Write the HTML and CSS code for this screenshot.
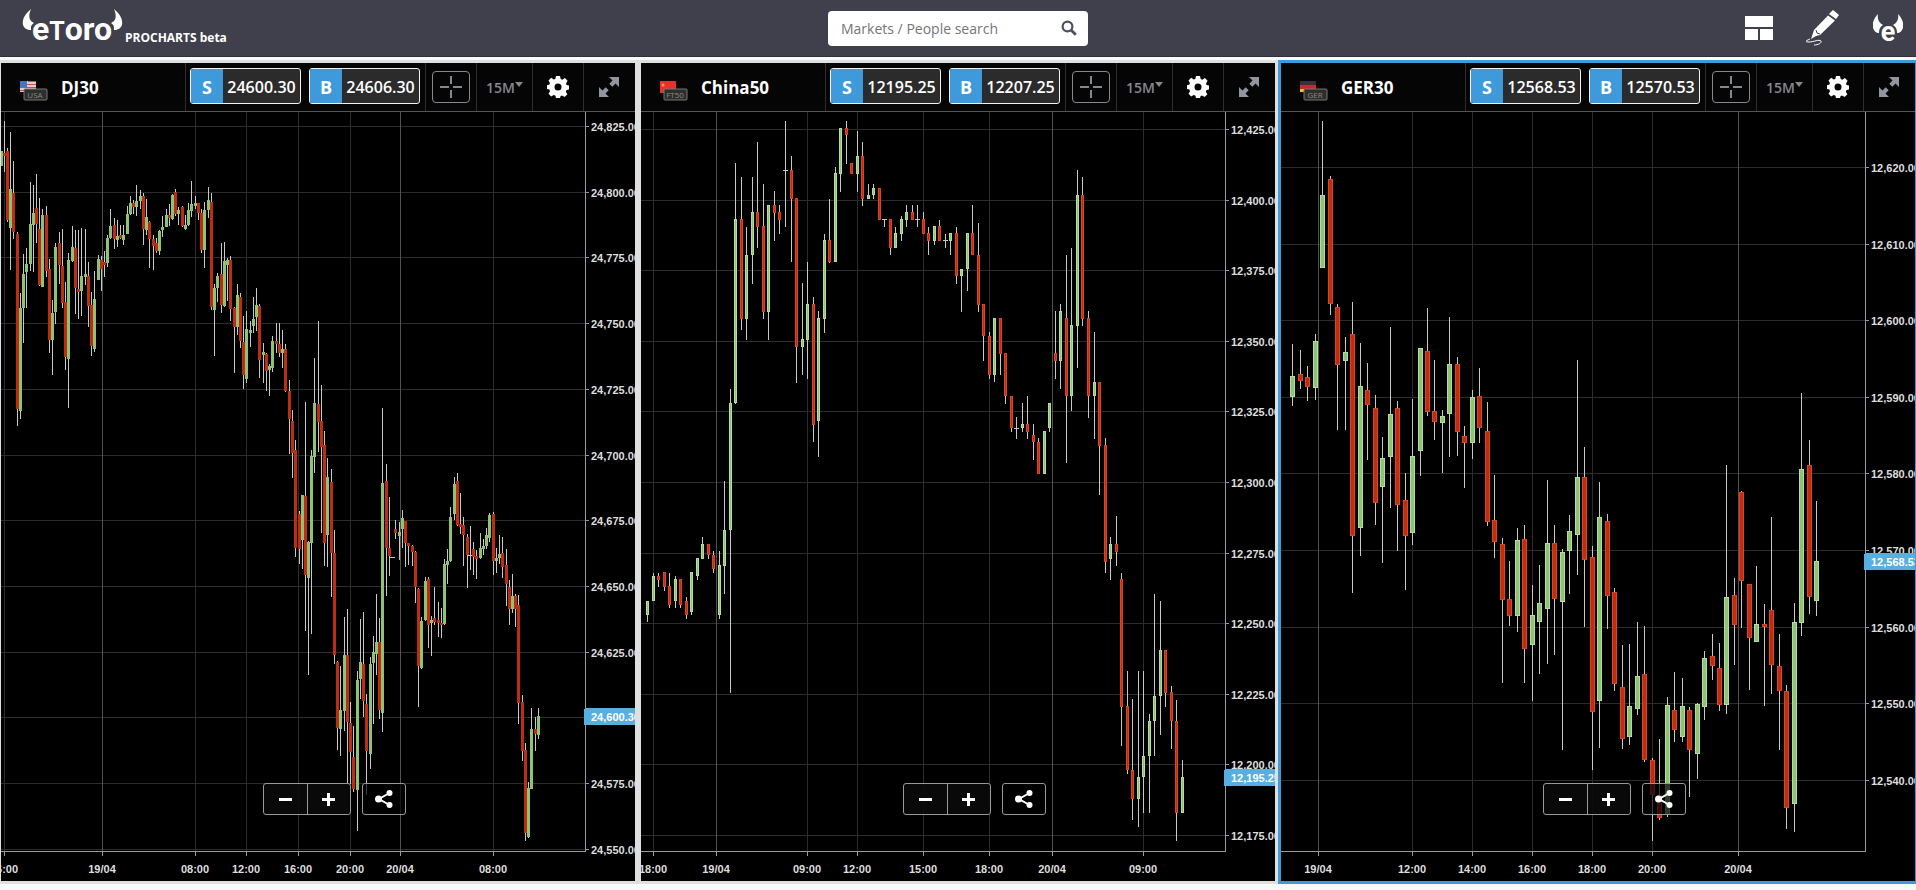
FILE: index.html
```html
<!-- index.html -->
<!DOCTYPE html>
<html lang="en">
  <head>
    <meta charset="utf-8">
    <title>eToro ProCharts</title>
    <link rel="stylesheet" href="styles.css">
  </head>
  <body>
    <header class="topbar">
      <a class="brand" href="#" aria-label="eToro ProCharts">
        <svg class="logo" width="101" height="36" viewBox="0 0 101 36">
          <path d="M9 1C3 6 0 11 1 17c1 3 4 5 8 5 0-4 0-5 3-7C7 13 6 8 9 1z"/>
          <path d="M92 1c6 5 9 10 8 16-1 3-4 5-8 5 0-4 0-5-3-7 5-2 6-7 3-14z"/>
          <text x="10" y="32"><tspan class="logo-low">e</tspan><tspan class="logo-cap">T</tspan><tspan class="logo-low">oro</tspan></text>
        </svg>
        <span class="brand-sub">PROCHARTS beta</span>
      </a>

      <form class="search" action="#" role="search">
        <input type="text" name="q" placeholder="Markets / People search" aria-label="Markets / People search">
        <button type="submit" aria-label="Search">
          <svg width="16" height="16" viewBox="0 0 16 16">
            <circle cx="6.5" cy="6.5" r="4.9" fill="none" stroke="#4b5060" stroke-width="2.2"/>
            <path d="M10 10l4.8 4.8" stroke="#4b5060" stroke-width="2.8"/>
          </svg>
        </button>
      </form>

      <nav class="tools">
        <button type="button" aria-label="Layout">
          <svg width="28" height="24" viewBox="0 0 28 24" fill="#fff">
            <path d="M0 0h28v11H0zM0 13h13v11H0zM15 13h13v11H15z"/>
          </svg>
        </button>
        <button type="button" aria-label="Draw">
          <svg width="34" height="36" viewBox="0 0 34 36">
            <path d="M27 0l6 5-3 4-7-5zM22 5.500l7 5L14 25l-4 1-5 3 2-6 1-3z" fill="#fff"/>
            <path d="M10 20l1 3 3 1" fill="none" stroke="#3f404c"/>
            <path d="M4 29c-5 2-5 3-1 3 5 0 10-3 12-1 1 2-3 4-7 4" fill="none" stroke="#fff"/>
          </svg>
        </button>
        <button type="button" aria-label="Account">
          <svg width="30" height="30" viewBox="0 0 30 30" fill="#fff">
            <path d="M5 1C1 5-1 10 0 15c1 3 3 5 6 5 0-4 1-6 4-8C6 10 4 6 5 1z"/>
            <path d="M25 1c4 4 6 9 5 14-1 3-3 5-6 5 0-4-1-6-4-8 4-2 6-6 5-11z"/>
            <text class="mini-e" x="15" y="28" text-anchor="middle">e</text>
          </svg>
        </button>
      </nav>
    </header>

    <svg class="defs" width="0" height="0" aria-hidden="true">
      <symbol id="gear" viewBox="0 0 22 22">
        <path fill="#fff" fill-rule="evenodd" d="M9 0h4l.7 3 1.600.7L18 2l2.600 2.800-1.600 2.600.7 1.600 2.300.5v4l-2.500.6-.7 1.600 1.600 2.600-2.800 2.800-2.500-1.600-1.500.6L13 22H9l-.7-2.500-1.600-.6L4.200 20.500 1.500 17.700 3 15.200l-.6-1.600L0 13V9.200l2.400-.7.6-1.600-1.500-2.500L4.200 1.700 6.700 3.600 8.300 3zM11 7.500a3.500 3.500 0 1 0 0 7 3.500 3.500 0 0 0 0-7z"/>
      </symbol>
      <symbol id="expand" viewBox="0 0 20 20">
        <path fill="#92979f" d="M10 0h10v10l-3.500-3.500-3.200 3.200-3-3 3.200-3.200zM0 10l3.500 3.500 3.200-3.200 3 3-3.200 3.200L10 20H0z"/>
      </symbol>
      <symbol id="cross" viewBox="0 0 24 24">
        <path fill="none" stroke="#85888f" stroke-width="2" d="M12 1v8M12 15v8M1 12h9M14 12h9"/>
      </symbol>
      <symbol id="share" viewBox="0 0 18 18">
        <path d="M14.500 3L4 9l10.500 6" fill="none" stroke="#fff" stroke-width="2"/>
        <circle cx="3.500" cy="9" r="3.500" fill="#fff"/>
        <circle cx="14.500" cy="3" r="3" fill="#fff"/>
        <circle cx="14.500" cy="15" r="3" fill="#fff"/>
      </symbol>
    </svg>

    <main class="panels">
      <section class="panel">
        <div class="panel-head">
          <div class="market">
            <svg width="28" height="20" viewBox="0 0 28 20">
              <rect width="16" height="11" fill="#e8c9cb"/>
              <path d="M0 3.500h16M0 6.500h16M0 9.500h16M8 .5h8" stroke="#d0494e"/>
              <rect width="7" height="6" fill="#3d78c4"/>
              <rect x="4" y="8" width="23" height="11" rx="1" fill="#2e2e2c" stroke="#777"/>
              <text class="tag" x="15" y="17" text-anchor="middle">USA</text>
            </svg>
            <h2>DJ30</h2>
          </div>
          <div class="trade">
            <button type="button"><b>S</b><span>24600.30</span></button>
            <button type="button"><b>B</b><span>24606.30</span></button>
          </div>
          <div class="cell cell-cross"><button type="button" aria-label="Crosshair"><svg width="24" height="24"><use href="#cross"/></svg></button></div>
          <div class="cell cell-period"><select aria-label="Period"><option>15M</option></select><i class="caret"></i></div>
          <div class="cell cell-gear"><button type="button" aria-label="Settings"><svg width="22" height="22"><use href="#gear"/></svg></button></div>
          <div class="cell cell-expand"><button type="button" aria-label="Expand"><svg width="20" height="20"><use href="#expand"/></svg></button></div>
        </div>
        <div class="chart" id="dj30">
          <div class="chart-tools">
            <div class="zoom">
              <button type="button" aria-label="Zoom out"><i class="minus"></i></button>
              <button type="button" aria-label="Zoom in"><i class="plus"></i></button>
            </div>
            <button type="button" class="share" aria-label="Share"><svg width="18" height="18"><use href="#share"/></svg></button>
          </div>
        </div>
      </section>

      <section class="panel">
        <div class="panel-head">
          <div class="market">
            <svg width="28" height="20" viewBox="0 0 28 20">
              <rect width="16" height="12" fill="#e8302c"/>
              <circle cx="3" cy="4" r="1.500" fill="#f2a03a"/>
              <rect x="4" y="8" width="23" height="11" rx="1" fill="#2e2e2c" stroke="#777"/>
              <text class="tag" x="15" y="17" text-anchor="middle">FT50</text>
            </svg>
            <h2>China50</h2>
          </div>
          <div class="trade">
            <button type="button"><b>S</b><span>12195.25</span></button>
            <button type="button"><b>B</b><span>12207.25</span></button>
          </div>
          <div class="cell cell-cross"><button type="button" aria-label="Crosshair"><svg width="24" height="24"><use href="#cross"/></svg></button></div>
          <div class="cell cell-period"><select aria-label="Period"><option>15M</option></select><i class="caret"></i></div>
          <div class="cell cell-gear"><button type="button" aria-label="Settings"><svg width="22" height="22"><use href="#gear"/></svg></button></div>
          <div class="cell cell-expand"><button type="button" aria-label="Expand"><svg width="20" height="20"><use href="#expand"/></svg></button></div>
        </div>
        <div class="chart" id="china50">
          <div class="chart-tools">
            <div class="zoom">
              <button type="button" aria-label="Zoom out"><i class="minus"></i></button>
              <button type="button" aria-label="Zoom in"><i class="plus"></i></button>
            </div>
            <button type="button" class="share" aria-label="Share"><svg width="18" height="18"><use href="#share"/></svg></button>
          </div>
        </div>
      </section>

      <section class="panel active">
        <div class="panel-head">
          <div class="market">
            <svg width="28" height="20" viewBox="0 0 28 20">
              <rect width="16" height="4" fill="#35343c"/>
              <rect y="4" width="16" height="4" fill="#d3232c"/>
              <rect y="8" width="16" height="3" fill="#f0c030"/>
              <rect x="4" y="8" width="23" height="11" rx="1" fill="#2e2e2c" stroke="#777"/>
              <text class="tag" x="15" y="17" text-anchor="middle">GER</text>
            </svg>
            <h2>GER30</h2>
          </div>
          <div class="trade">
            <button type="button"><b>S</b><span>12568.53</span></button>
            <button type="button"><b>B</b><span>12570.53</span></button>
          </div>
          <div class="cell cell-cross"><button type="button" aria-label="Crosshair"><svg width="24" height="24"><use href="#cross"/></svg></button></div>
          <div class="cell cell-period"><select aria-label="Period"><option>15M</option></select><i class="caret"></i></div>
          <div class="cell cell-gear"><button type="button" aria-label="Settings"><svg width="22" height="22"><use href="#gear"/></svg></button></div>
          <div class="cell cell-expand"><button type="button" aria-label="Expand"><svg width="20" height="20"><use href="#expand"/></svg></button></div>
        </div>
        <div class="chart" id="ger30">
          <div class="chart-tools">
            <div class="zoom">
              <button type="button" aria-label="Zoom out"><i class="minus"></i></button>
              <button type="button" aria-label="Zoom in"><i class="plus"></i></button>
            </div>
            <button type="button" class="share" aria-label="Share"><svg width="18" height="18"><use href="#share"/></svg></button>
          </div>
        </div>
      </section>
    </main>

    <script src="charts.js"></script>
  </body>
</html>
```
FILE: styles.css
```css
* {
  box-sizing: border-box;
}
body {
  margin: 0;
  height: 100vh;
  display: flex;
  flex-direction: column;
  overflow: hidden;
  background-color: #fafafa;
  font-family: "Open Sans", "Noto Sans", sans-serif;
}
button {
  margin: 0;
  padding: 0;
  border: none;
  background: none;
  color: #ffffff;
  font-family: inherit;
  cursor: pointer;
}
svg {
  display: block;
}
.defs {
  position: absolute;
}

/* top bar */
.topbar {
  display: grid;
  grid-template-columns: 1fr 260px 1fr;
  align-items: center;
  height: 57px;
  flex: none;
  background-color: #3f404c;
  border-bottom: 1px solid #332f38;
}
.brand {
  display: flex;
  align-items: flex-end;
  gap: 2px;
  padding: 0 0 4px 22px;
  color: #ffffff;
  text-decoration: none;
}
.logo {
  fill: #ffffff;
  overflow: visible;
  font-family: "Roboto", sans-serif;
  font-weight: bold;
}
.logo-low {
  font-size: 32px;
}
.logo-cap {
  font-size: 25px;
}
.brand-sub {
  font-size: 12px;
  line-height: 12px;
  font-weight: bold;
}
.search {
  display: flex;
  align-items: center;
  height: 35px;
  margin: 0;
  padding: 0 11px 0 13px;
  background-color: #ffffff;
  border-radius: 4px;
}
.search input {
  flex: 1;
  min-width: 0;
  padding: 0;
  border: none;
  outline: none;
  background: none;
  color: #555555;
  font: 14px "Open Sans", sans-serif;
}
.search input::placeholder {
  color: #757575;
}
.tools {
  display: flex;
  justify-content: flex-end;
  align-items: center;
  gap: 33px;
  padding-right: 13px;
}

/* chart panels */
.panels {
  display: grid;
  grid-template-columns: repeat(3, 1fr);
  flex: 1;
  min-height: 0;
  margin: 3px -2px 6px;
}
.panel {
  display: flex;
  flex-direction: column;
  min-width: 0;
  min-height: 0;
  border: 3px solid #dfdfdf;
  background-color: #000000;
}
.panel.active {
  border-color: #3f9adc;
}
.panel-head {
  display: flex;
  flex: none;
  height: 49px;
  background-color: #050505;
  border-bottom: 1px solid #555555;
}
.market {
  flex: 1;
  min-width: 0;
  display: flex;
  align-items: center;
  gap: 13px;
  padding-left: 19px;
}
.market svg {
  margin-top: 8px;
}
.market h2 {
  margin: 0;
  color: #ffffff;
  font-size: 17px;
  font-weight: bold;
}
.tag {
  fill: #8a8a88;
  font-size: 8px;
}
.trade {
  display: flex;
  gap: 8px;
  padding: 5px 5px 0 4px;
  border-left: 1px solid #2e2e2e;
}
.trade button {
  display: flex;
  width: 111px;
  height: 36px;
  border: 1px solid #f2f2f2;
  border-radius: 3px;
  overflow: hidden;
  background-color: #2b2b2b;
  font-size: 16px;
  line-height: 36px;
}
.trade b {
  width: 32px;
  background-color: #3f9adc;
  font-size: 18px;
}
.trade span {
  flex: 1;
  font-weight: 600;
}
.cell {
  display: flex;
  align-items: center;
  justify-content: center;
  border-left: 1px solid #2e2e2e;
}
.cell-cross {
  width: 51px;
}
.cell-cross button {
  display: grid;
  place-items: center;
  width: 38px;
  height: 32px;
  border: 1px solid #85888f;
  border-radius: 4px;
}
.cell-period {
  width: 56px;
}
.cell-gear {
  width: 51px;
}
.cell-expand {
  width: 52px;
  padding-right: 2px;
}
.cell-period select {
  appearance: none;
  padding: 0;
  border: none;
  background: none;
  color: #85888f;
  font: 600 14px "Open Sans", sans-serif;
}
.caret {
  margin-bottom: 6px;
  border: 4px solid transparent;
  border-top: 5px solid #85888f;
  border-bottom: none;
}
.mini-e {
  font: bold 27px "Roboto", sans-serif;
}

/* plot */
.chart {
  position: relative;
  flex: 1;
  min-height: 0;
  overflow: hidden;
}
.plot {
  position: absolute;
  width: 100%;
  height: 100%;
  shape-rendering: crispEdges;
}
.plot text {
  fill: #dedede;
  font: bold 11px "Liberation Sans", Arial, sans-serif;
}
.plot .last-text {
  fill: #ffffff;
}
.grid {
  fill: #2c2c2c;
}
.day {
  fill: #525252;
}
.axis {
  fill: #999999;
}
.wick {
  fill: #c8c8c8;
}
.up {
  fill: #8fc374;
}
.down {
  fill: #bd2d0f;
}
.up-edge {
  fill: #b5dca1;
}
.down-edge {
  fill: #e0431f;
}
.last {
  fill: #57afdf;
}
.chart-tools {
  position: absolute;
  left: 32px;
  right: 0;
  bottom: 66px;
  display: flex;
  justify-content: center;
  gap: 11px;
}
.zoom {
  display: flex;
  border: 1px solid #999999;
  border-radius: 3px;
  background-color: rgba(10, 10, 10, 0.9);
}
.zoom button {
  display: grid;
  place-items: center;
  width: 43px;
  height: 30px;
}
.zoom button + button {
  border-left: 1px solid #999999;
}
.minus, .plus {
  width: 13px;
  height: 13px;
  background: linear-gradient(#ffffff, #ffffff) center / 13px 3px no-repeat;
}
.plus {
  background: linear-gradient(#ffffff, #ffffff) center / 13px 3px no-repeat,
    linear-gradient(#ffffff, #ffffff) center / 3px 13px no-repeat;
}
.share {
  display: grid;
  place-items: center;
  width: 44px;
  height: 32px;
  border: 1px solid #999999;
  border-radius: 3px;
  background-color: rgba(0, 0, 0, 0.7);
}
```
FILE: charts.js
```js
// Chart geometry is kept on a 634 x 769 sheet and scaled to the panel.
const SHEET_W = 634;
const SHEET_H = 769;
const AXIS_X = 584;
const AXIS_Y = 739;

// candle rows: slot, high, body top, body bottom, low, u(p) / d(own) / n(one)
const charts = [
  {
    id: 'dj30',
    body: 3,
    outline: false,
    first: 24825, step: -25, count: 12, top: 14, gap: 65.7,
    times: [[3, '16:00'], [101, '19/04'], [194, '08:00'], [245, '12:00'], [297, '16:00'], [349, '20:00'], [399, '20/04'], [492, '08:00']],
    last: [604, '24,600.30'],
    candles: `
0 39 39 54 54 u;3 9 41 44 60 d;6 36 39 108 110 d;9 20 77 116 158 u;12 49 81 120 127 d
16 120 122 297 314 d;19 181 196 299 307 u;22 142 162 196 231 u;25 136 152 160 196 u;29 70 112 152 159 u
32 73 101 113 160 u;35 62 96 112 131 d;38 86 117 173 174 d;41 97 103 175 175 u;45 94 103 159 165 d
48 147 157 228 241 d;51 188 201 228 263 u;54 131 135 200 212 u;58 120 131 153 172 d;61 117 154 191 196 d
64 170 190 245 258 d;67 141 148 247 296 u;71 114 135 149 150 u;74 118 136 176 202 d;77 118 177 180 207 d
80 116 164 179 204 u;84 117 162 165 173 u;87 150 164 194 215 d;90 180 193 234 244 d;93 159 187 237 240 u
97 143 147 168 168 u;100 144 148 157 179 d;103 139 150 153 165 d;106 123 126 151 155 u;109 97 114 126 127 u
113 106 113 127 137 d;116 108 124 128 135 u;119 113 123 126 127 d;122 113 123 128 133 u;126 94 102 122 122 u
129 84 91 102 103 u;132 88 91 95 102 d;135 73 89 95 104 u;139 78 84 89 97 u;142 81 84 117 133 d
145 87 105 118 123 u;148 109 110 127 156 d;152 123 127 134 158 d;155 126 131 139 141 d;158 118 119 139 143 u
161 104 115 118 125 u;165 97 103 115 115 u;168 92 103 106 114 d;171 82 83 107 108 u;174 77 80 102 104 d
177 95 98 102 113 u;181 94 95 114 115 d;184 103 113 117 118 u;187 91 98 113 114 u;190 69 92 99 105 u
194 84 91 94 97 u;197 91 91 101 108 d;200 97 101 138 141 d;203 90 98 138 156 u;207 75 88 98 106 u
210 81 90 195 198 d;213 172 176 198 244 u;216 161 164 176 190 u;220 131 162 193 201 d;223 130 149 194 195 u
226 146 148 153 189 u;229 144 148 197 209 d;233 195 196 215 261 d;236 172 183 215 223 u;239 181 185 229 236 d
242 204 230 263 277 d;245 199 217 267 271 u;249 209 218 221 235 u;252 185 207 214 221 u;255 176 193 205 219 u
258 192 194 248 266 d;262 231 240 243 271 u;265 241 242 259 279 d;268 252 254 258 284 u;271 224 229 256 260 u
275 211 229 232 241 d;278 211 232 241 245 d;281 218 237 241 256 u;284 232 237 279 280 d;288 268 279 307 342 d
291 298 309 341 366 d;294 328 338 436 445 d;298 399 402 437 452 d;301 383 383 428 457 u;304 290 384 463 519 d
307 429 430 466 563 u;310 338 344 431 522 u;313 246 291 345 361 u;317 209 292 310 340 d;320 273 309 335 421 d
323 319 333 431 454 d;326 346 365 423 455 u;330 357 370 441 485 d;333 418 441 543 552 d;336 549 550 616 638 d
339 554 598 617 644 u;343 505 543 599 619 u;346 497 543 610 672 d;349 590 611 640 672 d;352 614 645 677 680 d
356 559 568 678 719 u;359 507 550 567 587 u;362 500 552 589 605 d;365 582 592 639 683 d;369 545 552 642 657 u
372 524 540 551 612 u;375 482 530 542 563 u;378 506 530 598 607 d;381 296 371 601 620 u;385 352 369 436 484 d
388 385 436 444 464 d;391 445 445 445 445 n;394 408 417 421 427 d;398 410 420 424 448 u;401 398 406 417 436 u
404 409 409 431 455 d;407 431 431 434 453 d;411 433 434 440 454 d;414 439 440 475 491 d;417 476 477 554 595 d
420 505 509 556 557 u;424 465 469 508 509 u;427 465 467 513 536 d;430 504 508 511 544 u;433 475 506 510 513 d
437 490 508 511 525 d;440 496 511 513 526 d;443 447 452 512 513 u;446 437 449 453 472 u;449 395 405 449 450 u
453 365 372 402 408 u;456 361 369 413 414 d;459 381 412 415 422 d;462 405 413 423 454 d;466 422 425 443 476 d
469 414 443 443 458 n;472 430 437 445 463 d;475 438 444 447 467 d;479 421 436 446 447 u;482 427 434 437 443 u
485 416 423 434 437 u;488 401 403 426 430 u;492 400 402 449 463 d;495 436 446 449 461 u;498 423 442 446 452 u
501 425 441 455 466 d;505 437 453 472 494 d;508 468 475 497 513 d;511 462 484 497 501 u;514 482 484 497 515 d
517 483 493 591 612 d;521 583 590 639 649 d;524 631 638 721 729 d;527 670 676 725 726 u;530 596 617 677 677 u
534 605 617 622 639 d;537 596 604 623 627 u`
  },
  {
    id: 'china50',
    body: 3,
    outline: true,
    first: 12425, step: -25, count: 11, top: 17, gap: 70.6,
    times: [[12, '18:00'], [75, '19/04'], [166, '09:00'], [216, '12:00'], [282, '15:00'], [348, '18:00'], [411, '20/04'], [502, '09:00']],
    last: [665, '12,195.25'],
    candles: `
6 489 489 503 510 u;12 461 464 489 489 u;17 461 464 468 475 d;23 460 460 475 479 d;28 461 474 493 496 d
34 464 467 489 496 u;39 467 467 493 496 d;45 485 489 503 507 d;50 460 460 500 503 u;56 446 446 464 468 u
61 425 432 447 447 u;67 432 432 443 447 d;72 439 443 457 461 d;78 439 453 503 507 u;83 369 418 454 482 u
89 277 291 418 581 u;94 51 107 291 292 u;100 65 107 207 218 d;105 115 143 207 228 u;111 65 100 143 172 u
116 30 100 115 136 d;122 72 114 200 207 d;127 93 93 200 228 u;133 79 93 101 129 d;138 93 100 108 122 d
144 9 58 58 115 n;150 44 58 87 150 d;155 86 86 235 271 d;161 171 227 235 263 u;166 150 192 228 267 u
172 185 192 313 330 d;177 199 206 309 345 u;183 122 128 207 221 u;188 87 128 150 151 d;194 55 61 150 150 u
199 16 16 62 80 u;205 9 16 23 52 d;210 51 51 62 62 d;216 19 44 62 80 u;221 30 44 87 94 d
227 72 83 87 87 u;232 72 76 83 87 u;238 76 76 108 108 d;243 107 107 107 115 n;249 107 107 136 143 d
254 115 121 136 136 u;260 104 107 122 129 u;265 93 100 108 115 u;271 93 100 108 108 d;276 93 107 107 115 n
282 100 107 122 122 d;287 115 121 129 143 d;293 114 114 129 133 u;298 108 114 129 129 d;304 122 128 128 136 n
309 121 121 129 143 u;315 115 121 164 172 d;320 157 157 164 200 u;326 121 121 157 179 u;331 93 121 143 143 d
337 111 143 193 200 d;342 192 192 224 249 d;348 220 224 263 267 d;353 206 206 263 270 u;359 206 206 242 263 d
364 241 241 284 292 d;370 284 284 316 320 d;375 305 316 316 327 n;381 291 312 316 320 u;386 284 312 320 327 d
392 312 323 330 348 d;397 326 330 362 362 d;403 319 319 362 362 u;408 291 291 316 320 u;414 199 241 249 267 d
419 192 199 249 277 u;425 143 206 284 351 d;430 136 213 284 299 u;436 58 83 214 256 u;441 65 83 207 214 d
447 199 206 284 306 d;453 220 270 284 327 u;458 270 270 334 383 d;464 326 333 450 461 d;469 425 432 447 468 u
475 404 432 440 454 d;480 461 467 595 634 d;486 559 594 658 662 d;491 587 658 687 708 d;497 559 665 687 715 u
502 559 644 665 701 u;508 602 609 644 701 u;513 482 584 609 644 u;519 489 538 584 623 u;524 538 538 581 595 d
530 574 580 609 637 d;535 588 609 701 729 d;541 648 665 701 701 u`
  },
  {
    id: 'ger30',
    body: 5,
    outline: true,
    first: 12620, step: -10, count: 9, top: 55, gap: 76.6,
    times: [[37, '19/04'], [131, '12:00'], [191, '14:00'], [251, '16:00'], [311, '18:00'], [371, '20:00'], [457, '20/04']],
    last: [449, '12,568.53'],
    candles: `
11 232 264 285 294 u;19 238 262 269 277 d;26 254 265 275 289 d;34 222 229 276 288 u;41 9 83 156 156 u
49 64 67 192 203 d;56 192 195 253 318 d;64 225 240 249 318 u;71 190 222 424 481 d;79 231 274 416 444 u
86 251 278 293 348 d;94 283 296 391 413 d;101 325 346 375 451 u;109 215 302 345 396 u;116 289 296 393 439 d
124 361 388 424 478 d;131 287 344 421 433 u;139 236 236 339 364 u;146 196 239 300 304 d;153 248 299 310 328 d
161 298 304 311 361 u;168 205 252 302 345 u;176 245 252 320 344 d;183 314 324 331 376 d;191 278 285 331 347 u
198 256 284 316 331 d;206 290 319 410 414 d;213 363 408 430 446 d;221 426 432 488 571 d;228 449 487 504 514 d
236 416 428 504 520 u;243 413 427 537 571 d;251 473 503 533 589 u;258 453 491 510 562 u;266 368 431 497 552 u
273 413 431 487 543 d;281 437 440 490 638 u;288 403 419 439 482 u;296 248 365 423 463 u;303 335 365 448 515 d
311 434 445 600 658 d;318 370 405 589 636 u;326 402 409 484 517 d;333 476 480 572 579 d;341 533 575 627 637 d
348 532 594 625 633 u;356 510 564 597 603 u;363 514 562 648 650 d;371 646 648 683 729 d;378 627 683 706 708 d
386 585 593 703 705 u;393 560 598 618 630 d;401 566 594 625 630 u;408 595 598 638 685 d;416 591 592 642 667 u
423 539 546 595 608 u;431 522 544 554 568 d;438 531 556 593 599 d;445 353 485 593 602 u;453 466 483 513 553 d
460 379 380 469 516 d;468 472 472 526 578 d;475 454 512 530 530 u;483 492 512 515 594 d;490 405 498 553 582 d
498 522 554 579 638 d;505 573 579 696 717 d;513 491 510 692 720 u;520 281 357 511 524 u;528 328 353 485 502 d
535 389 449 489 504 u`
  }
];

const SVG_NS = 'http://www.w3.org/2000/svg';

const rect = (svg, cls, x, y, w, h) => {
  const el = document.createElementNS(SVG_NS, 'rect');
  el.setAttribute('class', cls);
  el.setAttribute('x', x);
  el.setAttribute('y', y);
  el.setAttribute('width', Math.max(w, 0));
  el.setAttribute('height', Math.max(h, 0));
  svg.appendChild(el);
  return el;
};

const text = (svg, value, x, y, anchor, cls) => {
  const el = document.createElementNS(SVG_NS, 'text');
  el.setAttribute('x', x);
  el.setAttribute('y', y);
  el.setAttribute('text-anchor', anchor);
  if (cls) el.setAttribute('class', cls);
  el.textContent = value;
  svg.appendChild(el);
};

const draw = chart => {
  const box = document.getElementById(chart.id);
  const old = box.querySelector('.plot');
  if (old) old.remove();

  const svg = document.createElementNS(SVG_NS, 'svg');
  svg.setAttribute('class', 'plot');
  box.prepend(svg);

  const sx = v => Math.round(v * box.clientWidth / SHEET_W);
  const sy = v => Math.round(v * box.clientHeight / SHEET_H);
  const right = sx(AXIS_X);
  const bottom = sy(AXIS_Y);

  // grid and price labels
  for (let i = 0; i < chart.count; i++) {
    const y = sy(chart.top + i * chart.gap);
    const price = (chart.first + i * chart.step).toLocaleString('en-US', { minimumFractionDigits: 2 });
    rect(svg, 'grid', 0, y, right, 1);
    rect(svg, 'axis', right, y, 4, 1);
    text(svg, price, right + 6, y + 5, 'start');
  }
  chart.times.forEach(([slot, label]) => {
    const x = sx(slot);
    rect(svg, label.includes('/') ? 'day' : 'grid', x, 0, 1, bottom);
    rect(svg, 'axis', x, bottom, 1, 5);
    text(svg, label, x, bottom + 22, 'middle');
  });
  rect(svg, 'axis', right, 0, 1, bottom);
  rect(svg, 'axis', 0, bottom, right + 1, 1);

  // candles
  chart.candles.trim().split(/[;\n]/).forEach(row => {
    const [slot, high, top, low, tail, dir] = row.trim().split(' ');
    const x = sx(slot);
    const half = (chart.body - 1) / 2;
    rect(svg, 'wick', x, sy(high), 1, sy(tail) - sy(high));
    if (dir === 'n') {
      rect(svg, 'wick', x - 2, sy(top), 5, 1);
      return;
    }
    const cls = dir === 'u' ? 'up' : 'down';
    const h = sy(low) - sy(top);
    rect(svg, chart.outline ? cls + '-edge' : cls, x - half, sy(top), chart.body, h);
    if (chart.outline) {
      rect(svg, cls, x - half + 1, sy(top) + 1, chart.body - 2, h - 2);
    }
  });

  // current price
  const [lastY, lastPrice] = chart.last;
  rect(svg, 'last', right - 1, sy(lastY) - 8, box.clientWidth, 17).setAttribute('rx', 2);
  text(svg, lastPrice, right + 6, sy(lastY) + 5, 'start', 'last-text');
};

const drawAll = () => charts.forEach(draw);

drawAll();
window.addEventListener('resize', drawAll);
```
